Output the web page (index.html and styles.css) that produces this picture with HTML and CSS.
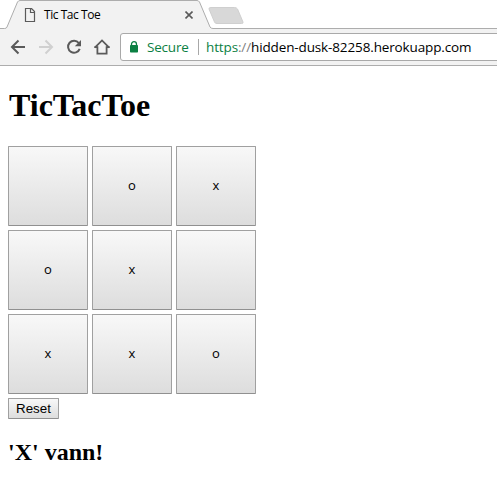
FILE: index.html
```html
<!DOCTYPE html>
<html lang="no">
<head>
<meta charset="utf-8">
<title>Tic Tac Toe</title>
<link rel="stylesheet" href="styles.css">
</head>
<body>
<header class="browser">
  <div class="tabstrip">
    <svg class="tab-shape" width="497" height="29" viewBox="0 0 497 29">
      <path d="M0 29V28.5H4.500Q6.500 28.500 7 27L17.500 2Q18.500.5 20 .5H197Q198.500.5 199.500 2L210 27Q211 28.500 213 28.500H497V29Z" fill="#f2f2f2"/>
      <path d="M0 28.500H4.500Q6.500 28.500 7 27L17.500 2Q18.500.5 20 .5H197Q198.500.5 199.500 2L210 27Q211 28.500 213 28.500H497" fill="none" stroke="#adadad"/>
      <path d="M211 7.500H234.500Q236.500 7.500 237.500 9L243 22Q243.500 23.500 241.500 23.500H217Q215 23.500 214.500 22L209 9Q208.500 7.500 211 7.500Z" fill="#d8d8d8" stroke="#cfcfcf"/>
    </svg>
    <div class="tab">
      <svg width="12" height="14" viewBox="0 0 12 14" fill="none" stroke="#5a5a5a"><path d="M1.500 .5H7.500L10.500 3.500V13.500H1.500ZM6.500 .5V4.500H10.500" stroke-width="1.200"/></svg>
      <span class="tab-title">Tic Tac Toe</span>
      <svg class="close" width="8" height="8" viewBox="0 0 8 8" fill="none" stroke="#5a5a5a" stroke-width="1.600"><path d="M.5 .5L7.500 7.500M7.500 .5L.5 7.500"/></svg>
    </div>
  </div>
  <div class="toolbar">
    <nav class="nav">
      <svg width="16" height="16" viewBox="0 0 16 16" fill="none" stroke="#5a5a5a" stroke-width="2"><path d="M15 8H2.500M8.500 1.500L2 8L8.500 14.500"/></svg>
      <svg width="16" height="16" viewBox="0 0 16 16" fill="none" stroke="#d0d0d0" stroke-width="2"><path d="M1 8H13.500M7.500 1.500L14 8L7.500 14.500"/></svg>
      <svg width="16" height="16" viewBox="0 0 16 16"><path d="M12.800 4A6 6 0 1 0 13.700 9.800" fill="none" stroke="#5a5a5a" stroke-width="2"/><path d="M15 1V7.200H8.800Z" fill="#5a5a5a"/></svg>
      <svg width="16" height="16" viewBox="0 0 16 16" fill="none" stroke="#5a5a5a" stroke-width="1.800"><path d="M.8 8.600L8 1.400L15.200 8.600M.2 8.200H3.400V14.600H12.600V8.200H15.800"/></svg>
    </nav>
    <div class="omnibox">
      <svg width="10" height="12" viewBox="0 0 10 12"><path d="M2.500 5V3.200a2.500 2.500 0 0 1 5 0V5" fill="none" stroke="#0b8043" stroke-width="1.300"/><rect x="1" y="4" width="8" height="7.500" rx=".8" fill="#0b8043"/></svg>
      <span class="secure">Secure</span>
      <span class="divider"></span>
      <span class="url"><span class="scheme">https</span><span class="slashes">://</span>hidden-dusk-82258.herokuapp.com</span>
    </div>
  </div>
</header>
<main class="page">
  <h1>TicTacToe</h1>
  <div class="board">
    <button class="cell"></button><button class="cell">o</button><button class="cell">x</button>
    <button class="cell">o</button><button class="cell">x</button><button class="cell"></button>
    <button class="cell">x</button><button class="cell">x</button><button class="cell">o</button>
  </div>
  <button class="reset">Reset</button>
  <h2>'X' vann!</h2>
</main>
</body>
</html>
```
FILE: styles.css
```css
body {
  margin: 0;
  background: #fff;
  color: #000;
  font-family: "Liberation Serif", serif;
  overflow: hidden;
}

.browser {
  font-family: "Open Sans", sans-serif;
}

svg {
  display: block;
  flex: none;
}

.tabstrip {
  display: grid;
  height: 29px;
}

.tab-shape,
.tab {
  grid-area: 1 / 1;
}

.tab {
  display: flex;
  align-items: center;
  width: 169px;
  height: 30px;
  padding-left: 24px;
}

.tab-title {
  margin-left: 8px;
  font-size: 12px;
  line-height: 16px;
  letter-spacing: -0.45px;
  padding-bottom: 1px;
  white-space: nowrap;
}

.close {
  margin-left: auto;
}

.toolbar {
  display: flex;
  box-sizing: border-box;
  height: 37px;
  padding-top: 4px;
  background: #f2f2f2;
  border-bottom: 1px solid #adadad;
}

.nav {
  display: flex;
  align-items: center;
  gap: 12px;
  width: 110px;
  height: 28px;
  padding-left: 10px;
}

.omnibox {
  display: flex;
  align-items: center;
  box-sizing: border-box;
  flex: 1;
  height: 28px;
  margin-right: -4px;
  padding-left: 8px;
  border: 1px solid #a9a9a9;
  border-radius: 3px;
  background: #fff;
  font-size: 13.5px;
  white-space: nowrap;
}

.secure {
  width: 51px;
  margin-left: 8px;
  color: #0b8043;
  letter-spacing: -0.2px;
}

.divider {
  width: 1px;
  height: 16px;
  margin-right: 7px;
  background: #a8a8a8;
}

.url {
  letter-spacing: -0.13px;
}

.scheme {
  color: #0b8043;
}

.slashes {
  color: #808080;
}

.page {
  padding: 0 8px;
}

h1 {
  margin: 21px 0;
  padding-left: 1px;
  font-size: 32px;
  line-height: 37px;
}

.board {
  display: grid;
  grid-template-columns: repeat(3, 80px);
  grid-auto-rows: 80px;
  gap: 4px;
  margin-top: 22px;
}

button {
  box-sizing: border-box;
  border: 1px solid #a0a0a0;
  border-bottom-color: #909090;
  border-radius: 1px;
  background: linear-gradient(#f8f8f8, #ddd);
  color: #000;
  font-family: "Liberation Sans", sans-serif;
  font-size: 13.333px;
}

.cell {
  padding: 0 0 2px;
  font-family: "Open Sans", sans-serif;
  font-size: 13px;
}

.reset {
  display: block;
  width: 51px;
  height: 21px;
  margin-top: 4px;
  padding: 0;
}

h2 {
  margin: 20px 0;
  font-size: 24px;
  line-height: 27px;
}
```
